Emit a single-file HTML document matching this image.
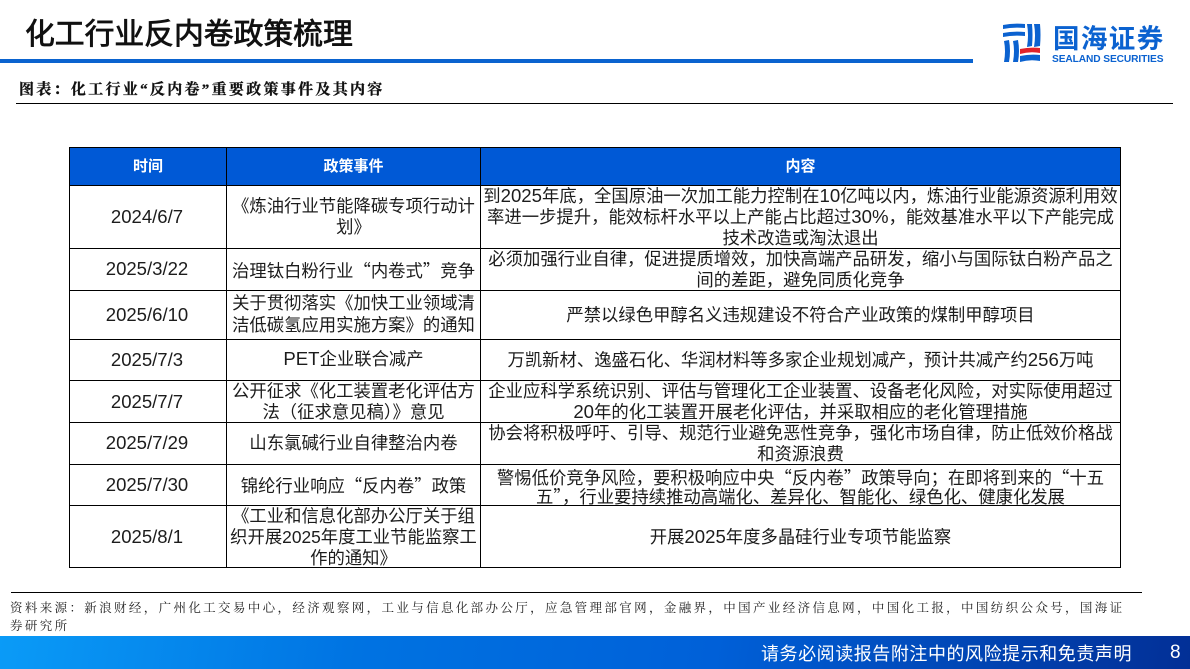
<!DOCTYPE html>
<html lang="zh"><head><meta charset="utf-8"><style>
html,body{margin:0;padding:0;background:#fff}
#p{position:relative;width:1190px;height:669px;overflow:hidden;background:#fff;font-family:"Liberation Sans","Noto Sans CJK SC",sans-serif;color:#1a1a1a}
.a{position:absolute}
.t{position:absolute;white-space:nowrap;font-size:17.35px;line-height:21px;text-align:center;letter-spacing:0;color:#1c1c1c}
.d{font-size:18.55px;margin-left:-1px}
.n{font-size:18.6px}
.q{font-family:"Noto Sans CJK SC",sans-serif}
.c1{left:70px;width:156px}.c2{left:227px;width:253px}.c3{left:481px;width:639px}
.hd{top:156px;font-size:15px;font-weight:700;color:#fff}
.v{position:absolute;background:#000;width:1px;top:147px;height:421px}
.l{position:absolute;left:69px;width:1052px;height:1px;background:#000}
</style></head><body><div id="p">
<div class="a" style="left:25px;top:10px;font-size:29.8px;line-height:42px;-webkit-text-stroke:.8px #111;color:#111;white-space:nowrap;font-family:'Noto Sans CJK SC',sans-serif">化工行业反内卷政策梳理</div>
<div class="a" style="left:0;top:59px;width:973px;height:4px;background:#0a63cf"></div>
<div class="a" style="left:19px;top:80px;font-family:'Liberation Serif','Noto Serif CJK SC',serif;font-weight:700;font-size:15px;line-height:20px;letter-spacing:2.3px;color:#111;white-space:nowrap;-webkit-text-stroke:.3px #111">图表：化工行业“反内卷”重要政策事件及其内容</div>
<div class="a" style="left:16px;top:103px;width:1157px;height:1px;background:#000"></div>

<svg class="a" style="left:995px;top:18px" width="52" height="48" viewBox="0 0 52 48">
<g fill="#0b62d0">
<path d="M8 7 Q18 5 30 6 L30 10 Q18 9 8 11Z"/>
<path d="M8 15 Q18 13 30 14 L30 18 Q18 17 8 19Z"/>
<path d="M9 23 L14 22 Q16 33 14 44 L9 44 Q11 33 9 23Z"/>
<path d="M18 23 L23 22 Q25 33 23 44 L18 44 Q20 33 18 23Z"/>
<path d="M32 6 L37 6 Q38 17 37 28 L32 29 Q34 17 32 6Z"/>
<path d="M39 6 L45 6 Q46 17 45 28 L39 29 Q41 17 39 6Z"/>
<path d="M25 38 Q35 36 45 37 L45 43 Q35 41 25 44Z"/>
</g>
<path d="M25 31 Q35 29 45 30 L45 35 Q35 33 25 36Z" fill="#e0232b"/>
</svg>
<div class="a" style="left:1053px;top:21px;font-size:26.5px;line-height:32px;font-weight:700;color:#0b62d0;letter-spacing:1.4px;white-space:nowrap;font-family:'Noto Sans CJK SC',sans-serif">国海证券</div>
<div class="a" style="left:1052px;top:53px;font-size:10.2px;line-height:13px;font-weight:700;color:#0b62d0;white-space:nowrap;letter-spacing:-.1px">SEALAND SECURITIES</div>

<div class="a" style="left:69px;top:147px;width:1052px;height:38px;background:#0059d6"></div>
<div class="l" style="top:147px"></div><div class="l" style="top:185px"></div><div class="l" style="top:248px"></div><div class="l" style="top:290px"></div><div class="l" style="top:339px"></div><div class="l" style="top:380px"></div><div class="l" style="top:422px"></div><div class="l" style="top:464px"></div><div class="l" style="top:505px"></div><div class="l" style="top:567px"></div>
<div class="v" style="left:69px"></div><div class="v" style="left:226px"></div><div class="v" style="left:480px"></div><div class="v" style="left:1120px"></div>

<div class="t c1 hd">时间</div>
<div class="t c2 hd">政策事件</div>
<div class="t c3 hd">内容</div>

<div class="t c1 d" style="top:206px">2024/6/7</div>
<div class="t c1 d" style="top:258px">2025/3/22</div>
<div class="t c1 d" style="top:304px">2025/6/10</div>
<div class="t c1 d" style="top:349px">2025/7/3</div>
<div class="t c1 d" style="top:391px">2025/7/7</div>
<div class="t c1 d" style="top:432px">2025/7/29</div>
<div class="t c1 d" style="top:474px">2025/7/30</div>
<div class="t c1 d" style="top:526px">2025/8/1</div>

<div class="t c2" style="top:196px">《炼油行业节能降碳专项行动计</div>
<div class="t c2" style="top:217px">划》</div>
<div class="t c2" style="top:259px">治理钛白粉行业<span class="q">“</span>内卷式<span class="q">”</span>竞争</div>
<div class="t c2" style="top:293px">关于贯彻落实《加快工业领域清</div>
<div class="t c2" style="top:315px">洁低碳氢应用实施方案》的通知</div>
<div class="t c2" style="top:348px"><span class="n">PET</span>企业联合减产</div>
<div class="t c2" style="top:381px">公开征求《化工装置老化评估方</div>
<div class="t c2" style="top:402px">法（征求意见稿）》意见</div>
<div class="t c2" style="top:433px">山东氯碱行业自律整治内卷</div>
<div class="t c2" style="top:474px">锦纶行业响应<span class="q">“</span>反内卷<span class="q">”</span>政策</div>
<div class="t c2" style="top:506px">《工业和信息化部办公厅关于组</div>
<div class="t c2" style="top:527px">织开展2025年度工业节能监察工</div>
<div class="t c2" style="top:548px">作的通知》</div>

<div class="t c3" style="top:185px">到<span class="n">2025</span>年底，全国原油一次加工能力控制在<span class="n">10</span>亿吨以内，炼油行业能源资源利用效</div>
<div class="t c3" style="top:206px">率进一步提升，能效标杆水平以上产能占比超过<span class="n">30%</span>，能效基准水平以下产能完成</div>
<div class="t c3" style="top:228px">技术改造或淘汰退出</div>
<div class="t c3" style="top:249px">必须加强行业自律，促进提质增效，加快高端产品研发，缩小与国际钛白粉产品之</div>
<div class="t c3" style="top:270px">间的差距，避免同质化竞争</div>
<div class="t c3" style="top:305px">严禁以绿色甲醇名义违规建设不符合产业政策的煤制甲醇项目</div>
<div class="t c3" style="top:349px">万凯新材、逸盛石化、华润材料等多家企业规划减产，预计共减产约<span class="n">256</span>万吨</div>
<div class="t c3" style="top:381px">企业应科学系统识别、评估与管理化工企业装置、设备老化风险，对实际使用超过</div>
<div class="t c3" style="top:401px"><span class="n">20</span>年的化工装置开展老化评估，并采取相应的老化管理措施</div>
<div class="t c3" style="top:423px">协会将积极呼吁、引导、规范行业避免恶性竞争，强化市场自律，防止低效价格战</div>
<div class="t c3" style="top:444px">和资源浪费</div>
<div class="t c3" style="top:466px">警惕低价竞争风险，要积极响应中央<span class="q">“</span>反内卷<span class="q">”</span>政策导向；在即将到来的<span class="q">“</span>十五</div>
<div class="t c3" style="top:485px">五<span class="q">”</span>，行业要持续推动高端化、差异化、智能化、绿色化、健康化发展</div>
<div class="t c3" style="top:526px">开展<span class="n">2025</span>年度多晶硅行业专项节能监察</div>

<div class="a" style="left:11px;top:592px;width:1131px;height:1px;background:#000"></div>
<div class="a" style="left:10px;top:598px;font-family:'Noto Serif CJK SC',serif;font-size:12.5px;line-height:18px;letter-spacing:2.36px;color:#222;white-space:nowrap">资料来源：新浪财经，广州化工交易中心，经济观察网，工业与信息化部办公厅，应急管理部官网，金融界，中国产业经济信息网，中国化工报，中国纺织公众号，国海证<br>券研究所</div>

<div class="a" style="left:0;top:636px;width:1190px;height:33px;background:linear-gradient(100deg,#0a9bf7 0%,#0073e2 30%,#0060d8 60%,#022f96 100%)"></div>
<div class="a" style="left:761px;top:641px;font-size:18px;line-height:24px;color:#fff;white-space:nowrap;letter-spacing:.55px;font-family:'Noto Sans CJK SC',sans-serif">请务必阅读报告附注中的风险提示和免责声明</div>
<div class="a" style="left:1170px;top:641px;font-size:19px;line-height:24px;color:#fff">8</div>
</div></body></html>
